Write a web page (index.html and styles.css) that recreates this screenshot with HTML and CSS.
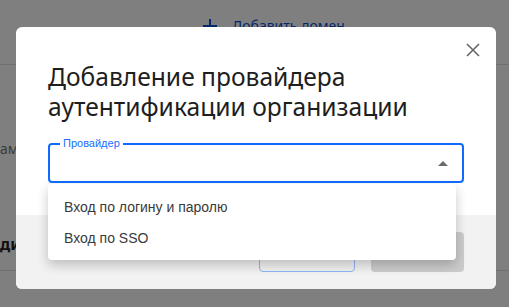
FILE: index.html
```html
<!DOCTYPE html>
<html lang="ru">
<head>
<meta charset="utf-8">
<title>Провайдер</title>
<link rel="stylesheet" href="styles.css">
</head>
<body>
<div class="page">
  <div class="page-top">
    <a class="add-domain">
      <svg class="plus" width="14" height="14" viewBox="0 0 14 14"><path d="M7 0v14M0 7h14" stroke="currentColor" stroke-width="2"/></svg>
      <span>Добавить домен</span>
    </a>
  </div>
  <div class="rule rule-a"></div>
  <div class="frag frag-a">ам</div>
  <div class="frag frag-b">ди</div>
  <div class="rule rule-b"></div>
</div>

<div class="overlay">
  <div class="dialog">
    <button class="close" aria-label="Закрыть">
      <svg width="14" height="14" viewBox="0 0 14 14"><path d="M1 1L13 13M13 1L1 13" stroke="#666" stroke-width="1.6"/></svg>
    </button>
    <div class="dialog-body">
      <h1 class="title">Добавление провайдера аутентификации организации</h1>
      <div class="select">
        <span class="select-label">Провайдер</span>
        <span class="select-arrow"></span>
        <ul class="menu">
          <li class="menu-item">Вход по логину и паролю</li>
          <li class="menu-item">Вход по SSO</li>
        </ul>
      </div>
    </div>
    <div class="dialog-footer">
      <button class="btn btn-outline">Отмена</button>
      <button class="btn btn-filled">Добавить</button>
    </div>
  </div>
</div>
</body>
</html>
```
FILE: styles.css
```css
* { box-sizing: border-box; }
html, body { margin: 0; padding: 0; }
body {
  width: 509px;
  height: 307px;
  overflow: hidden;
  background: #ffffff;
  font-family: "Noto Sans", "Open Sans", sans-serif;
}

/* underlying page */
.page {
  display: flex;
  flex-direction: column;
  height: 307px;
}
.page-top {
  height: 64px;
  padding: 19px 0 0 203px;
}
.add-domain {
  display: flex;
  align-items: center;
  gap: 15px;
  color: #0b4fd6;
  font-size: 14px;
  line-height: 14px;
}
.plus { display: block; }
.rule { height: 1px; background: #e0e0e0; }
.frag { font-size: 14px; color: #777; }
.frag-a { margin-top: 76px; line-height: 16px; }
.frag-b { margin-top: 78px; font-weight: 700; font-size: 16px; color: #222; line-height: 18px; }
.rule-b { margin-top: 17px; }

/* overlay & dialog */
.overlay {
  position: fixed;
  inset: 0;
  background: rgba(0, 0, 0, 0.5);
  padding: 27px 0 0 16px;
}
.dialog {
  position: relative;
  width: 480px;
  height: 262px;
  background: #ffffff;
  border-radius: 6px;
  display: flex;
  flex-direction: column;
}
.close {
  position: absolute;
  top: 16px;
  right: 16px;
  width: 14px;
  height: 14px;
  padding: 0;
  border: 0;
  background: transparent;
}
.close svg { display: block; }
.dialog-body {
  height: 188px;
  padding: 35px 32px 0;
}
.title {
  margin: 0;
  font-size: 24.6px;
  line-height: 30px;
  font-weight: 400;
  color: #1e1e1e;
  width: 390px;
}
.select {
  position: relative;
  margin-top: 21px;
  height: 40px;
  border: 2px solid #0f6bff;
  border-radius: 4px;
  display: flex;
  align-items: center;
  justify-content: flex-end;
  padding-right: 14px;
}
.select-label {
  position: absolute;
  left: 10px;
  top: -8px;
  padding: 0 3px;
  background: #fff;
  color: #1a6dff;
  font-family: "Liberation Sans", Arial, sans-serif;
  font-size: 11px;
  line-height: 12px;
}
.select-arrow {
  width: 0;
  height: 0;
  border-left: 5px solid transparent;
  border-right: 5px solid transparent;
  border-bottom: 5px solid #6b6b6b;
}
.menu {
  position: absolute;
  left: -2px;
  top: 39px;
  width: 408px;
  margin: 0;
  padding: 7px 0;
  list-style: none;
  background: #fff;
  border-radius: 4px;
  box-shadow: 0 5px 12px rgba(0, 0, 0, 0.22);
  z-index: 2;
}
.menu-item {
  height: 31px;
  padding-left: 16px;
  display: flex;
  align-items: center;
  font-family: "Liberation Sans", Arial, sans-serif;
  font-size: 14px;
  color: #3a3a3a;
}
.dialog-footer {
  flex: 1;
  background: #f2f2f2;
  border-radius: 0 0 6px 6px;
  display: flex;
  justify-content: flex-end;
  align-items: center;
  gap: 16px;
  padding: 0 32px;
}
.btn {
  height: 40px;
  border-radius: 4px;
  font-family: "Liberation Sans", Arial, sans-serif;
  font-size: 14px;
}
.btn-outline {
  width: 96px;
  border: 1px solid #8fb4f5;
  background: transparent;
  color: #8fb4f5;
}
.btn-filled {
  width: 93px;
  border: 0;
  background: #cccccc;
  color: #eee;
}
```
